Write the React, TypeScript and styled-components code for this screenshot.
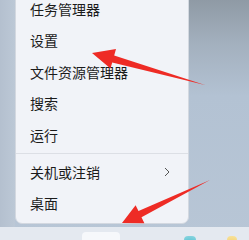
import React from "react";
import styled, { createGlobalStyle } from "styled-components";

const Global = createGlobalStyle`
  html, body { margin: 0; padding: 0; }
  body { font-family: "Noto Sans CJK SC", "Noto Sans", sans-serif; }
`;

const Page = styled.div`
  position: relative;
  width: 249px;
  height: 240px;
  overflow: hidden;
  display: grid;
  grid-template-rows: 1fr 13px;
  background: linear-gradient(180deg, #8f9aa5 0%, #a3b0be 18%, #b3c2d3 40%, #b8c6d6 100%);
`;

const Desktop = styled.div`
  display: flex;
  align-items: flex-start;
  padding-left: 15px;
  background: linear-gradient(90deg, #b4c0cf 0px, #bcc8d6 15px, transparent 15px);
`;

const Menu = styled.div`
  width: 174px;
  box-sizing: border-box;
  margin-top: -8px;
  padding: 0 0 4px;
  background: #f1f3f8;
  border: 1px solid #d3d8e0;
  border-radius: 7px;
  display: flex;
  flex-direction: column;
`;

const Item = styled.div`
  height: 31.5px;
  display: flex;
  align-items: center;
  justify-content: space-between;
  padding: 0 18px 0 14px;
  font-size: 14px;
  color: #1b1b1b;
  line-height: 1;
`;

const Separator = styled.div`
  height: 5.5px;
  display: flex;
  align-items: center;
  &::after {
    content: "";
    flex: 1;
    height: 1px;
    background: #dcdfe5;
  }
`;

const Chevron = styled.svg`
  width: 6px;
  height: 10px;
`;

const Taskbar = styled.div`
  display: flex;
  align-items: flex-start;
  padding-left: 82px;
  background: #e4e9f0;
`;

const TaskButton = styled.div<{ $w: number; $ml: number; $bg: string; $mt: number }>`
  width: ${(p) => p.$w}px;
  height: 13px;
  margin-left: ${(p) => p.$ml}px;
  margin-top: ${(p) => p.$mt}px;
  border-radius: 4px;
  background: ${(p) => p.$bg};
`;

const Overlay = styled.svg`
  position: absolute;
  left: 0;
  top: 0;
  width: 249px;
  height: 240px;
  pointer-events: none;
`;

const items = ["任务管理器", "设置", "文件资源管理器", "搜索", "运行"];

export default function App() {
  return (
    <>
      <Global />
      <Page>
        <Desktop>
          <Menu>
            {items.map((t) => (
              <Item key={t}>{t}</Item>
            ))}
            <Separator />
            <Item>
              关机或注销
              <Chevron viewBox="0 0 6 10">
                <path d="M1 1 L5 5 L1 9" fill="none" stroke="#555" strokeWidth="1" />
              </Chevron>
            </Item>
            <Item>桌面</Item>
          </Menu>
        </Desktop>
        <Taskbar>
          <TaskButton $w={38} $ml={0} $mt={5} $bg="#f6f8fb" />
          <TaskButton $w={12} $ml={64} $mt={9} $bg="radial-gradient(circle at 50% 100%, #2bb3c7, #8fd6e0)" />
          <TaskButton $w={10} $ml={31} $mt={9} $bg="radial-gradient(circle at 50% 100%, #f2c44a, #f7e3a0)" />
        </Taskbar>
        <Overlay viewBox="0 0 249 240">
          <polygon
            points="92,53 116,49 114.2,55.6 205,85 112.2,62.4 110.5,68.6"
            fill="#ee2b25"
          />
          <polygon
            points="122,223 135.6,205.2 138.5,211.1 210,180 141.5,217.3 144.4,223.2"
            fill="#ee2b25"
          />
        </Overlay>
      </Page>
    </>
  );
}
